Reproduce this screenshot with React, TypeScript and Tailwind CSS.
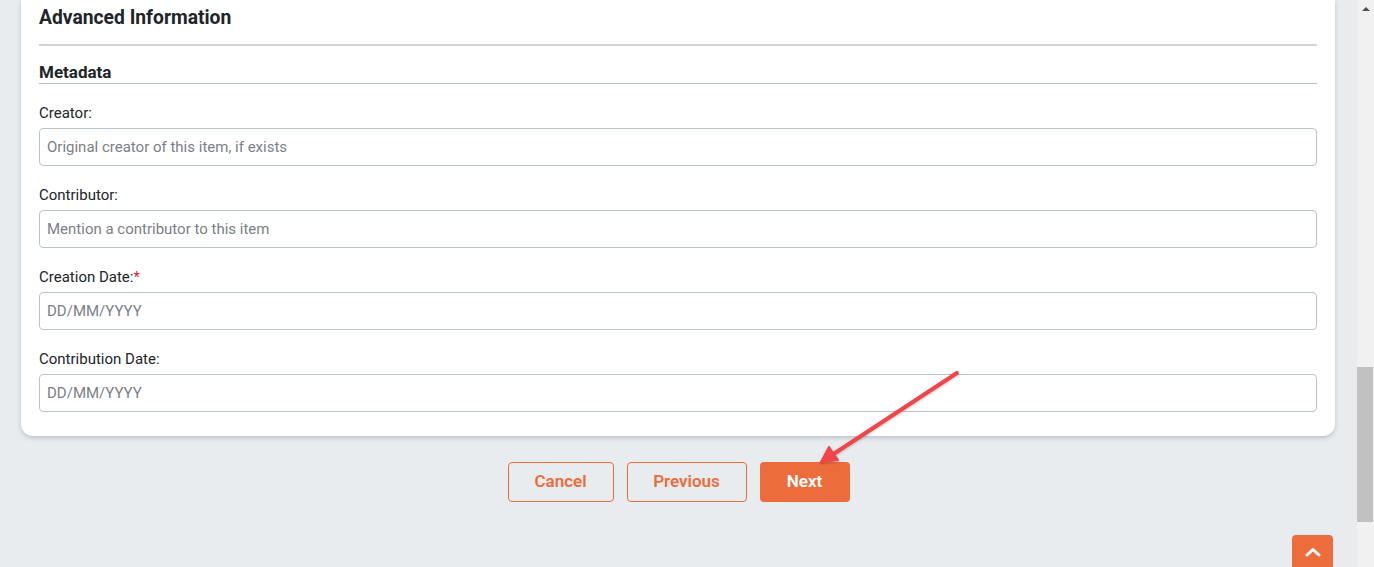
import type { ReactNode } from 'react';

const font = { fontFamily: 'Roboto, "Liberation Sans", sans-serif' };

function Field({ label, placeholder, required }: { label: string; placeholder: string; required?: boolean }) {
  return (
    <div>
      <label className="block text-[15px] leading-[21px] text-[#212529]">
        {label}
        {required && <span className="text-[#e3242b]">*</span>}
      </label>
      <input
        type="text"
        placeholder={placeholder}
        className="mt-[4px] block h-[38px] w-full rounded-[4px] border border-[#b9c4cc] bg-white px-[7px] text-[15px] text-[#212529] outline-none placeholder:text-[#7a8087]"
      />
    </div>
  );
}

function OutlineButton({ children, className }: { children: ReactNode; className?: string }) {
  return (
    <button
      type="button"
      className={`h-[40px] rounded-[4px] border border-[#ec6d3b] text-[17px] font-semibold text-[#ec6d3b] ${className ?? ''}`}
    >
      {children}
    </button>
  );
}

function Scrollbar() {
  return (
    <div className="flex h-[567px] w-[17px] flex-col bg-[#f1f1f1]">
      <div className="flex h-[17px] items-center justify-center">
        <div className="h-0 w-0 border-x-[4px] border-b-[4px] border-x-transparent border-b-[#505050]" />
      </div>
      <div className="mt-[350px] h-[155px] w-[16px] bg-[#c1c1c1]" />
    </div>
  );
}

export default function App() {
  return (
    <div className="flex h-[567px] w-[1374px] overflow-hidden" style={font}>
      <main className="relative h-[567px] flex-1 bg-[#e9ecef]">
        <section className="ml-[21px] mr-[22px] rounded-b-[12px] bg-white px-[18px] pb-[24px] pt-[5px] shadow-[0_2px_4px_rgba(100,116,130,0.35)]">
          <h2 className="text-[19.3px] font-bold leading-[25px] text-[#212529]">Advanced Information</h2>
          <div className="mt-[14px] h-[2px] bg-[#ced4da]" />
          <h3 className="mt-[16px] border-b border-[#b7c0c7] text-[17px] font-bold leading-[21px] text-[#212529]">Metadata</h3>
          <div className="mt-[19px] flex flex-col gap-[19px]">
            <Field label="Creator:" placeholder="Original creator of this item, if exists" />
            <Field label="Contributor:" placeholder="Mention a contributor to this item" />
            <Field label="Creation Date:" placeholder="DD/MM/YYYY" required />
            <Field label="Contribution Date:" placeholder="DD/MM/YYYY" />
          </div>
        </section>

        <div className="mt-[26px] flex justify-center gap-[13px]">
          <OutlineButton className="w-[106px]">Cancel</OutlineButton>
          <OutlineButton className="w-[120px]">Previous</OutlineButton>
          <button type="button" className="h-[40px] w-[90px] rounded-[4px] bg-[#ec6d3b] text-[17px] font-semibold text-white">
            Next
          </button>
        </div>

        <svg className="pointer-events-none absolute left-0 top-0" width="1357" height="567">
          <defs>
            <filter id="sh" x="-10%" y="-10%" width="120%" height="120%">
              <feDropShadow dx="0" dy="1" stdDeviation="1" floodColor="#000" floodOpacity="0.25" />
            </filter>
          </defs>
          <g filter="url(#sh)" stroke="#f0454c" strokeLinecap="round" strokeLinejoin="round" fill="#f0454c">
            <line x1="957" y1="373" x2="832" y2="455" strokeWidth="4" />
            <polygon points="821,462 829,447 838,460" strokeWidth="2" />
          </g>
        </svg>

        <button
          type="button"
          className="absolute left-[1292px] top-[535px] flex h-[40px] w-[41px] items-start justify-center rounded-t-[4px] bg-[#ec6d3b] pt-[12px]"
        >
          <svg width="16" height="10" viewBox="0 0 16 10" fill="none">
            <path d="M2 8 L8 2.5 L14 8" stroke="white" strokeWidth="3" strokeLinecap="round" strokeLinejoin="round" />
          </svg>
        </button>
      </main>
      <Scrollbar />
    </div>
  );
}
